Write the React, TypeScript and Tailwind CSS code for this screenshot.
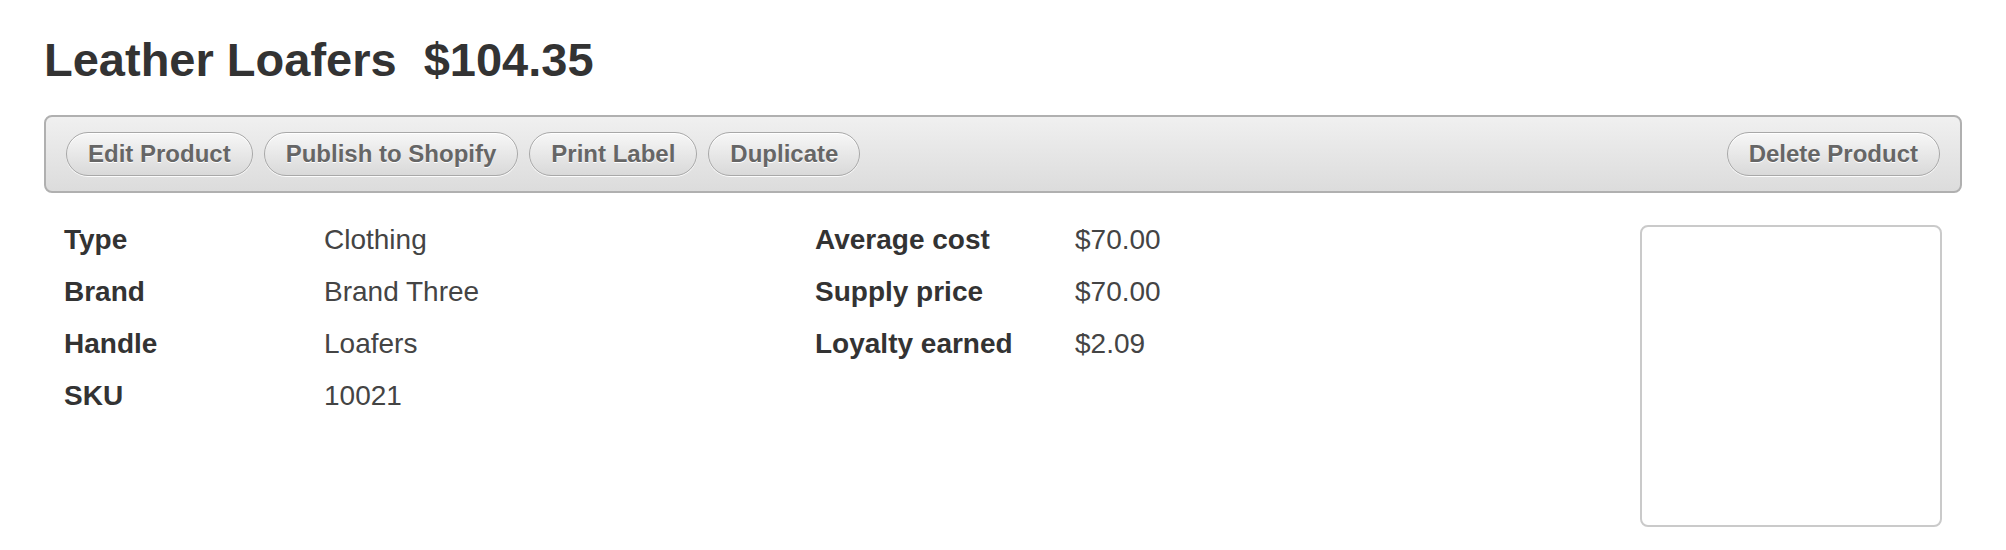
const actions = ["Edit Product", "Publish to Shopify", "Print Label", "Duplicate"];

const details = [
  { label: "Type", value: "Clothing" },
  { label: "Brand", value: "Brand Three" },
  { label: "Handle", value: "Loafers" },
  { label: "SKU", value: "10021" },
];

const costs = [
  { label: "Average cost", value: "$70.00" },
  { label: "Supply price", value: "$70.00" },
  { label: "Loyalty earned", value: "$2.09" },
];

function ToolButton({ children }: { children: React.ReactNode }) {
  return (
    <button className="h-[44px] rounded-full border border-[#a8a8a8] bg-gradient-to-b from-[#f7f7f7] to-[#d9d9d9] px-[21px] text-[24px] font-bold leading-[42px] text-[#666] shadow-[inset_0_1px_0_#fff,0_1px_0_rgba(255,255,255,0.9)] [text-shadow:0_1px_0_#fff]">
      {children}
    </button>
  );
}

function InfoList({ rows }: { rows: { label: string; value: string }[] }) {
  return (
    <dl className="grid w-[751px] grid-cols-[260px_1fr] content-start">
      {rows.map((row) => (
        <div key={row.label} className="contents">
          <dt className="text-[28px] font-bold leading-[52px] text-[#333]">{row.label}</dt>
          <dd className="text-[28px] leading-[52px] text-[#444]">{row.value}</dd>
        </div>
      ))}
    </dl>
  );
}

export default function App() {
  return (
    <div className="min-h-[550px] bg-white px-[44px] pt-[37px] font-['Liberation_Sans',Arial,sans-serif]">
      <h1 className="mb-[32px] flex gap-[27px] text-[47px] font-bold leading-[46px] text-[#333]">
        <span>Leather Loafers</span>
        <span>$104.35</span>
      </h1>

      <div className="flex h-[78px] items-center rounded-[8px] border-2 border-[#b0b0b0] bg-gradient-to-b from-[#f0f0f0] to-[#dcdcdc] px-[20px]">
        <div className="flex gap-[11px]">
          {actions.map((a) => (
            <ToolButton key={a}>{a}</ToolButton>
          ))}
        </div>
        <div className="ml-auto">
          <ToolButton>Delete Product</ToolButton>
        </div>
      </div>

      <div className="flex px-[20px] pt-[21px]">
        <InfoList rows={details} />
        <InfoList rows={costs} />
        <div className="ml-auto mt-[11px] h-[302px] w-[302px] rounded-[8px] border-2 border-[#cacaca] bg-white" />
      </div>
    </div>
  );
}
